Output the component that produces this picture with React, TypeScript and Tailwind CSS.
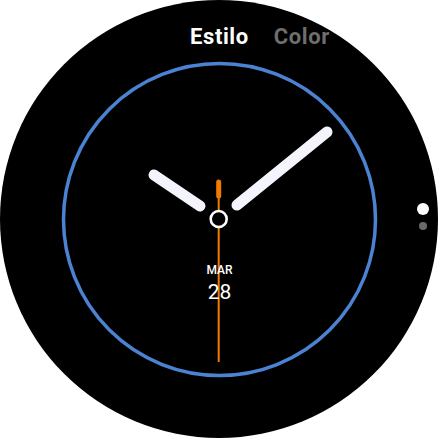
import React from "react";

export default function App() {
  return (
    <div className="w-[438px] h-[438px] bg-white" style={{ fontFamily: "Roboto, 'Liberation Sans', sans-serif" }}>
      <div className="relative w-[438px] h-[438px] rounded-full bg-black flex flex-col overflow-hidden">
        <svg className="absolute inset-0" width="438" height="438" viewBox="0 0 438 438">
          <circle cx="219.5" cy="219.5" r="156" fill="none" stroke="#4b82d2" strokeWidth="3.5" />
          <line x1="154" y1="175" x2="200" y2="206" stroke="#f4f4fc" strokeWidth="11" strokeLinecap="round" />
          <line x1="237" y1="205" x2="327" y2="132" stroke="#f4f4fc" strokeWidth="11" strokeLinecap="round" />
          <line x1="218.7" y1="182" x2="218.7" y2="196" stroke="#f27a00" strokeWidth="5" strokeLinecap="round" />
          <line x1="218.7" y1="196" x2="218.7" y2="362" stroke="#f27a00" strokeWidth="2" />
          <circle cx="218.7" cy="219" r="8" fill="#000" stroke="#ffffff" strokeWidth="2.6" />
        </svg>
        <div className="relative flex flex-row gap-[25px] pl-[190px] mt-[24px] text-[22px] font-bold leading-[26px] tracking-[0.6px]">
          <span className="text-white">Estilo</span>
          <span className="text-[#6e6e6e]">Color</span>
        </div>
        <div className="relative flex flex-col items-center mt-[213px] ml-px text-white">
          <span className="text-[12px] font-medium leading-[14px]">MAR</span>
          <span className="text-[21px] leading-[24px] mt-[3px]">28</span>
        </div>
        <div className="absolute right-[9px] top-[203px] flex flex-col items-center gap-[7px]">
          <div className="w-[12px] h-[12px] rounded-full bg-white" />
          <div className="w-[8px] h-[8px] rounded-full bg-[#6a6a6a]" />
        </div>
      </div>
    </div>
  );
}
